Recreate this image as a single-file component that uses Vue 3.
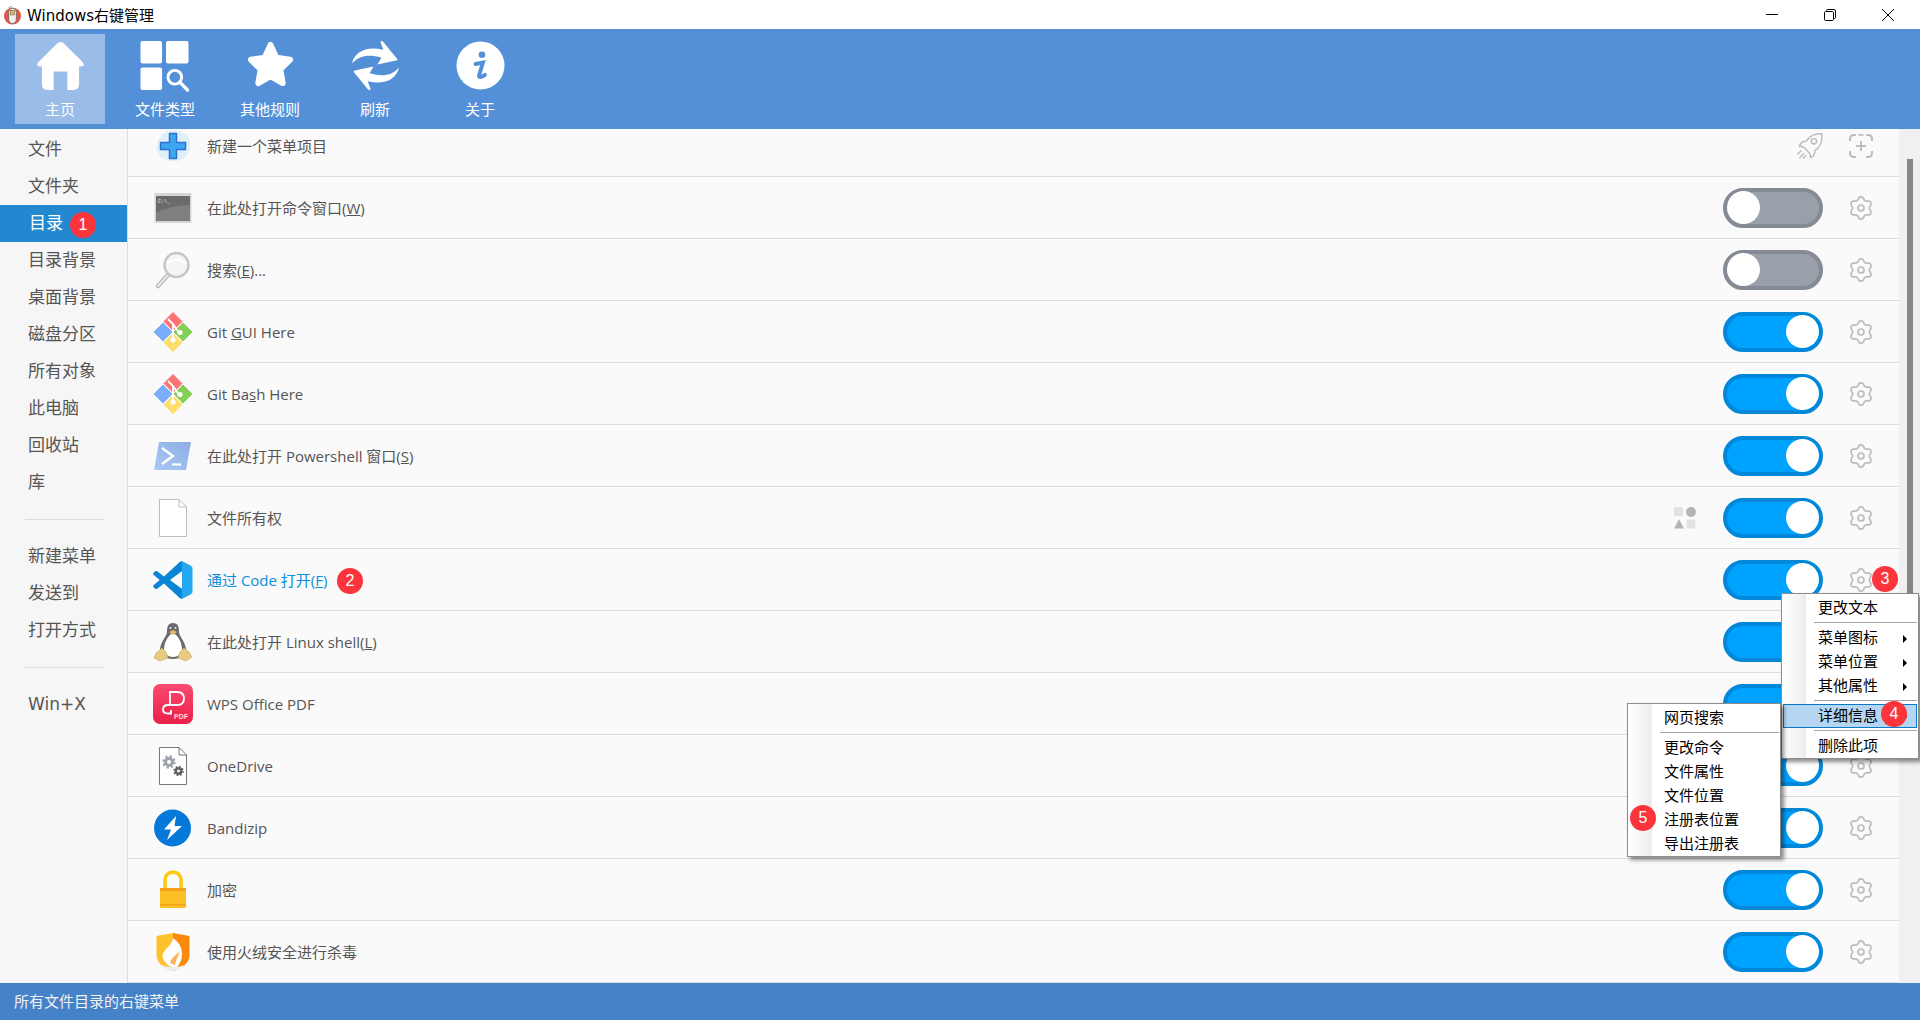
<script setup>
const tools = [
  { key: 'home', label: '主页', active: true },
  { key: 'types', label: '文件类型' },
  { key: 'rules', label: '其他规则' },
  { key: 'refresh', label: '刷新' },
  { key: 'about', label: '关于' }
]
const sideA = ['文件', '文件夹', '目录', '目录背景', '桌面背景', '磁盘分区', '所有对象', '此电脑', '回收站', '库']
const sideB = ['新建菜单', '发送到', '打开方式']
const rows = [
  { icon: 'plus', pre: '新建一个菜单项目', first: true },
  { icon: 'cmd', pre: '在此处打开命令窗口(', key: 'W', post: ')', off: true },
  { icon: 'search', pre: '搜索(', key: 'E', post: ')...', off: true },
  { icon: 'git', pre: 'Git ', key: 'G', post: 'UI Here' },
  { icon: 'git', pre: 'Git Ba', key: 's', post: 'h Here' },
  { icon: 'ps', pre: '在此处打开 Powershell 窗口(', key: 'S', post: ')' },
  { icon: 'doc', pre: '文件所有权', widget: true },
  { icon: 'code', pre: '通过 Code 打开(', key: 'F', post: ')', link: true },
  { icon: 'tux', pre: '在此处打开 Linux shell(', key: 'L', post: ')' },
  { icon: 'wps', pre: 'WPS Office PDF' },
  { icon: 'onedrive', pre: 'OneDrive' },
  { icon: 'bandizip', pre: 'Bandizip' },
  { icon: 'lock', pre: '加密' },
  { icon: 'shield', pre: '使用火绒安全进行杀毒' }
]
const menuOne = [
  { text: '更改文本' }, { sep: true },
  { text: '菜单图标', sub: true }, { text: '菜单位置', sub: true }, { text: '其他属性', sub: true }, { sep: true },
  { text: '详细信息', sub: true, hot: true }, { sep: true },
  { text: '删除此项' }
]
const menuTwo = [
  { text: '网页搜索' }, { sep: true },
  { text: '更改命令' }, { text: '文件属性' }, { text: '文件位置' }, { text: '注册表位置' }, { text: '导出注册表' }
]
const badges = [
  { n: 1, x: 83, y: 225 }, { n: 2, x: 350, y: 581 }, { n: 3, x: 1885, y: 579 },
  { n: 4, x: 1894, y: 714 }, { n: 5, x: 1643, y: 818 }
]
function lobed(cx, cy, base, amp) {
  const pts = []
  for (let i = 0; i < 96; i++) {
    const t = (i / 96) * Math.PI * 2
    const r = base + amp * Math.cos(6 * t)
    pts.push((cx + r * Math.sin(t)).toFixed(2) + ' ' + (cy - r * Math.cos(t)).toFixed(2))
  }
  return 'M' + pts.join('L') + 'Z'
}
const gearPath = lobed(12, 12, 9.8, 1.5)
</script>

<template>
  <div class="app">
    <header class="titlebar">
      <svg class="logo" viewBox="0 0 20 20">
        <circle cx="10" cy="11" r="9" fill="#e0584c" />
        <path d="M6 7a4 4 0 0 1 8 0v8a4 4 0 0 1-8 0z" fill="#f4f1ea" stroke="#555" stroke-width=".7" />
        <rect x="8" y="5" width="4" height="5" fill="#e8b64c" stroke="#555" stroke-width=".5" />
        <path d="M9 1l-3 1" stroke="#888" fill="none" />
      </svg>
      <span class="title">Windows右键管理</span>
      <div class="controls">
        <svg viewBox="0 0 12 12" class="ctl"><path d="M0 5.5H12" stroke="#000" /></svg>
        <svg viewBox="0 0 12 12" class="ctl"><path d="M2.5 2.5V1.5Q2.5.5 3.5.5H10Q11.5.5 11.5 2V8.5Q11.5 9.5 10.5 9.5H9.5" stroke="#000" fill="none" /><rect x=".5" y="2.5" width="9" height="9" rx="1.2" stroke="#000" fill="#fff" /></svg>
        <svg viewBox="0 0 12 12" class="ctl"><path d="M0 0L12 12M12 0L0 12" stroke="#000" /></svg>
      </div>
    </header>

    <nav class="toolbar">
      <div v-for="t in tools" :key="t.key" class="tool" :class="{ active: t.active }">
        <svg class="tool-icon" viewBox="0 0 50 50" fill="#fff">
          <template v-if="t.key === 'home'">
            <path d="M25 1Q27 1 29 3L47 21Q51 26 46 26H44V44Q44 50 38 50H32V31H18V50H12Q6 50 6 44V26H4Q-1 26 3 21L21 3Q23 1 25 1Z" />
          </template>
          <template v-else-if="t.key === 'types'">
            <g transform="translate(-1.5 0)">
              <rect x="1" width="22" height="23" rx="2" />
              <rect x="27" width="23" height="23" rx="2" />
              <rect x="1" y="27" width="22" height="23" rx="2" />
              <circle cx="36" cy="37" r="7" fill="none" stroke="#fff" stroke-width="3" />
              <path d="M41 42L49 50" stroke="#fff" stroke-width="3.4" stroke-linecap="round" />
            </g>
          </template>
          <template v-else-if="t.key === 'rules'">
            <path d="M25 4L31 17L45 19L35 29L37.500 43L25 36L12.500 43L15 29L5 19L19 17Z" stroke="#fff" stroke-width="6" stroke-linejoin="round" />
          </template>
          <template v-else-if="t.key === 'refresh'">
            <path d="M1 23C4 10 17 5 33 9L30 1Q31-1 33 1L47 18Q48 20 46 20L27 24L31 17C18 13 8 15 1 23Z" />
            <path transform="rotate(180 25 25)" d="M1 23C4 10 17 5 33 9L30 1Q31-1 33 1L47 18Q48 20 46 20L27 24L31 17C18 13 8 15 1 23Z" />
          </template>
          <template v-else>
            <circle cx="25" cy="25" r="24.500" />
            <circle cx="26.500" cy="14" r="3.400" fill="#5490d7" />
            <path d="M20 23.500L27.500 22L23.500 35Q23 39 29.500 34.500" fill="none" stroke="#5490d7" stroke-width="4" stroke-linecap="round" />
          </template>
        </svg>
        <span class="tool-label">{{ t.label }}</span>
      </div>
    </nav>

    <div class="main">
      <aside class="side">
        <div v-for="s in sideA" :key="s" class="side-item" :class="{ current: s === '目录' }">{{ s }}</div>
        <div class="side-sep"></div>
        <div v-for="s in sideB" :key="s" class="side-item">{{ s }}</div>
        <div class="side-sep"></div>
        <div class="side-item">Win+X</div>
      </aside>

      <section class="list-wrap">
        <div class="list">
          <div v-for="(r, i) in rows" :key="i" class="row">
            <svg class="row-icon" viewBox="0 0 40 40">
              <template v-if="r.icon === 'plus'">
                <path d="M8 10Q14 2 26 5Q38 8 37 20Q37 32 24 35Q10 37 5 27Q1 18 8 10Z" fill="#dff0fc" />
                <path d="M16.500 7.500H23.500V16.500H32.500V23.500H23.500V32.500H16.500V23.500H7.500V16.500H16.500Z" fill="#3ea6f2" stroke="#2a70cc" stroke-width="1.500" stroke-linejoin="round" />
              </template>
              <template v-else-if="r.icon === 'cmd'">
                <rect x="1.500" y="5" width="37" height="30" fill="#d6d6d6" />
                <rect x="3" y="8" width="34" height="25" fill="#7f7f7f" />
                <path d="M3 8H37V17Q18 17 3 25Z" fill="#6b6b6b" />
                <text x="5" y="14.500" class="cmd-text">C:\_</text>
              </template>
              <template v-else-if="r.icon === 'search'">
                <path d="M15 25L5 36" stroke="#bdbdbd" stroke-width="4.500" stroke-linecap="round" />
                <path d="M15 25L5 36" stroke="#f3f3f3" stroke-width="1.500" stroke-linecap="round" />
                <circle cx="23.500" cy="15" r="12" fill="#f5f5f5" stroke="#c6c6c6" stroke-width="2.500" />
                <path d="M14 13Q23 7 33 13" fill="none" stroke="#fff" stroke-width="2" />
              </template>
              <template v-else-if="r.icon === 'git'">
                <path d="M20 .5L29 9.500L20 18.500L11 9.500Z" fill="#fb7474" stroke="#fb7474" stroke-linejoin="round" />
                <path d="M10 11L19 20L10 29L1 20Z" fill="#7aaefc" stroke="#7aaefc" stroke-linejoin="round" />
                <path d="M30 11L39 20L30 29L21 20Z" fill="#83cf58" stroke="#83cf58" stroke-linejoin="round" />
                <path d="M20 21.500L29 30.500L20 39.500L11 30.500Z" fill="#fedd6a" stroke="#fedd6a" stroke-linejoin="round" />
                <path d="M15 7L20 12L25.500 20M20 12V28" stroke="#fff" stroke-width="1.800" fill="none" />
                <circle cx="27" cy="20.500" r="2.600" fill="#fff" />
                <circle cx="20" cy="28" r="2.600" fill="#fff" />
              </template>
              <template v-else-if="r.icon === 'ps'">
                <defs><linearGradient id="psg" x1="0" y1="1" x2="1" y2="0"><stop offset="0" stop-color="#a8c8f5" /><stop offset="1" stop-color="#8eaee2" /></linearGradient></defs>
                <path d="M6 6H38L33 34H1Z" fill="url(#psg)" />
                <path d="M9 12L20 20L9 28" fill="none" stroke="#fff" stroke-width="2.400" />
                <path d="M19 28.500H28" stroke="#fff" stroke-width="2.200" />
              </template>
              <template v-else-if="r.icon === 'doc'">
                <path d="M6.500 1.500H26L33.500 9V38.500H6.500Z" fill="#fff" stroke="#bdbdbd" />
                <path d="M26 1.500V9H33.500" fill="none" stroke="#bdbdbd" />
              </template>
              <template v-else-if="r.icon === 'code'">
                <path fill-rule="evenodd" d="M38 6L29.600 1.600C28.600 1.100 27.400 1.300 26.700 2.100L11 16.500L4.200 11.300C3.500 10.800 2.600 10.900 2 11.400L.8 12.500C0 13.200 0 14.400.8 15.100L6.700 20L.8 24.900C0 25.600 0 26.800.8 27.500L2 28.600C2.600 29.100 3.500 29.200 4.200 28.700L11 23.500L26.700 37.900C27.400 38.700 28.600 38.900 29.600 38.400L38 34ZM29 11L17 20L29 29Z" fill="#0a84d4" />
                <path d="M29 1.400L38 6C39 6.500 39.500 7.300 39.500 8.500V31.500C39.500 32.700 39 33.500 38 34L29 38.600Z" fill="#23a9f2" />
              </template>
              <template v-else-if="r.icon === 'tux'">
                <path d="M20 1C15 1 14 5 14 10C14 14 8 19 7 27C7 33 12 37 20 37C28 37 33 33 33 27C32 19 26 14 26 10C26 5 25 1 20 1Z" fill="#6a6a6a" />
                <path d="M20 11C15 13 11 21 11 27C11 32 15 35 20 35C25 35 29 32 29 27C29 21 25 13 20 11Z" fill="#fff" />
                <path d="M16 10L20 8L24 10L20 13Z" fill="#e3b766" />
                <circle cx="17.500" cy="6" r="1" fill="#eee" /><circle cx="22.500" cy="6" r="1" fill="#eee" />
                <path d="M9 26L13 30L15 36L7 39L1 36L3 31Z" fill="#e8cb82" stroke="#c9a95d" stroke-width=".6" />
                <path d="M31 26L27 30L25 36L33 39L39 35L36 30Z" fill="#e8cb82" stroke="#c9a95d" stroke-width=".6" />
              </template>
              <template v-else-if="r.icon === 'wps'">
                <defs><linearGradient id="wpsg" x1="0" y1="0" x2="0" y2="1"><stop offset="0" stop-color="#fb4a70" /><stop offset="1" stop-color="#e92049" /></linearGradient></defs>
                <rect width="40" height="40" rx="7" fill="url(#wpsg)" />
                <path d="M17 22V8H24Q31 8 31 14.500Q31 21 24 21H15Q10 21 10 25.500Q10 29.500 15 29.500H18V26" fill="none" stroke="#fff" stroke-width="1.800" />
                <text x="21" y="34.500" class="pdf-text">PDF</text>
              </template>
              <template v-else-if="r.icon === 'onedrive'">
                <path d="M6.500 1.500H26L33.500 9V38.500H6.500Z" fill="#fff" stroke="#777" />
                <path d="M26 1.500V9H33.500" fill="none" stroke="#777" />
                <circle cx="16" cy="16" r="3.500" fill="none" stroke="#9aa1a8" stroke-width="3" />
                <circle cx="16" cy="16" r="5.800" fill="none" stroke="#9aa1a8" stroke-width="1.800" stroke-dasharray="2.300 2.250" />
                <circle cx="25.500" cy="25" r="2.700" fill="none" stroke="#5c6166" stroke-width="2.400" />
                <circle cx="25.500" cy="25" r="4.500" fill="none" stroke="#5c6166" stroke-width="1.500" stroke-dasharray="1.800 1.730" />
              </template>
              <template v-else-if="r.icon === 'bandizip'">
                <circle cx="19.500" cy="20" r="18.500" fill="#0479d9" />
                <path d="M23 8L11 21.500H18L14 32L29 18H21.500Z" fill="#fff" />
              </template>
              <template v-else-if="r.icon === 'lock'">
                <path d="M12 19V10A8 8 0 0 1 28 10V19" fill="none" stroke="#ffc90e" stroke-width="3.600" />
                <rect x="7" y="18" width="26" height="20" rx="1.500" fill="#fdbf26" />
                <rect x="7" y="18" width="26" height="3" fill="#f59f1c" />
                <rect x="7" y="34" width="26" height="1.500" fill="#f59f1c" />
              </template>
              <template v-else>
                <path d="M20 1L3.500 4V24Q5 35 20 39Z" fill="#fdc12b" />
                <path d="M20 1L36.500 4V24Q35 35 20 39Z" fill="#fb8a0c" />
                <path d="M13 31Q6 24 13 17Q19 12 20 6Q29 12 29 22Q29 30 24 35Q16 36 13 31Z" fill="#fff" />
                <path d="M17 31Q19 24 27 20Q23 27 22 33Z" fill="#fdb35a" />
                <path d="M8 33Q13 38 20 39Q27 38 32 33Q26 35 20 35Q13 35 8 33Z" fill="#eee" />
              </template>
            </svg>
            <span class="row-text" :class="{ link: r.link }">{{ r.pre }}<u v-if="r.key">{{ r.key }}</u>{{ r.post }}</span>
            <svg v-if="r.widget" class="widget" viewBox="0 0 22 22">
              <rect width="9" height="9" rx="1.500" fill="#e3e3e3" />
              <circle cx="17" cy="5" r="5" fill="#b4b4b4" />
              <path d="M5 12L10 21.500H0Z" fill="#b4b4b4" />
              <rect x="12.500" y="12.500" width="9" height="9" rx="1.500" fill="#e3e3e3" />
            </svg>
            <div class="slot">
              <svg v-if="r.first" class="rocket" viewBox="1 1 24.500 25" fill="none" stroke="#bcbcbc" stroke-width="1.400" stroke-linejoin="round">
                <path d="M24.500 1.500C18 1.500 12.500 4.500 9.500 9C7 9 4 10.500 3 14C5 13.500 6.500 14 8 15.500L12 19.500C13.500 21 14 22.500 13.500 24.500C17 23.500 18 20.500 18 18C22.500 15 25.500 9 24.500 1.500Z" />
                <circle cx="17" cy="9" r="2.600" />
                <path d="M1 21.500L5 18M3 25L7.500 20.500M6.500 25.500L9.500 22.500" />
              </svg>
              <div v-else class="toggle" :class="{ off: r.off }"><span class="knob"></span></div>
            </div>
            <svg class="gear" viewBox="0 0 24 24" fill="none" stroke="#bcbcbc" stroke-width="1.700">
              <template v-if="r.first">
                <path d="M1 7V5Q1 1 5 1H7M17 1H19Q23 1 23 5V7M23 17V19Q23 23 19 23H17M7 23H5Q1 23 1 19V17M9.500.8H14.500" stroke-width="2" />
                <path d="M12 7V17M7 12H17" stroke-width="2" />
              </template>
              <template v-else>
                <path :d="gearPath" />
                <circle cx="12" cy="12" r="3" />
              </template>
            </svg>
          </div>
        </div>
        <div class="scroll"><div class="thumb"></div></div>
      </section>
    </div>

    <footer class="status">所有文件目录的右键菜单</footer>

    <div class="menu menu-one">
      <template v-for="(m, i) in menuOne" :key="i">
        <div v-if="m.sep" class="msep"></div>
        <div v-else class="mitem" :class="{ hot: m.hot }">{{ m.text }}<i v-if="m.sub" class="caret"></i></div>
      </template>
    </div>
    <div class="menu menu-two">
      <template v-for="(m, i) in menuTwo" :key="i">
        <div v-if="m.sep" class="msep"></div>
        <div v-else class="mitem">{{ m.text }}</div>
      </template>
    </div>

    <span v-for="b in badges" :key="b.n" class="badge" :style="{ left: b.x - 13 + 'px', top: b.y - 13 + 'px' }">{{ b.n }}</span>
  </div>
</template>

<style scoped>
.app {
  position: relative;
  width: 1920px;
  height: 1021px;
  display: flex;
  flex-direction: column;
  overflow: hidden;
  background: #fff;
  font-family: "Open Sans", "Noto Sans CJK SC", sans-serif;
  color: #555;
}
.titlebar {
  height: 29px;
  flex: none;
  display: flex;
  align-items: center;
  padding-left: 3px;
}
.logo { width: 19px; height: 20px; margin-right: 5px; }
.title { font: 15px "DejaVu Sans", "Noto Sans CJK SC", sans-serif; color: #000; }
.controls {
  margin-left: auto;
  display: flex;
  gap: 46px;
  padding-right: 26px;
}
.ctl { width: 12px; height: 12px; }
.toolbar {
  height: 100px;
  flex: none;
  background: #5490d7;
  display: flex;
  gap: 15px;
  padding: 5px 0 0 15px;
  box-sizing: border-box;
}
.tool {
  width: 90px;
  height: 90px;
  display: flex;
  flex-direction: column;
  align-items: center;
  padding-top: 7px;
  box-sizing: border-box;
}
.tool.active { background: #9abce8; }
.tool-icon { width: 49px; height: 49px; overflow: visible; }
.tool-label { font-size: 15px; line-height: 20px; margin-top: 9px; color: #fff; }
.main { flex: 1; display: flex; min-height: 0; }
.side {
  width: 127px;
  flex: none;
  background: #f6f6f6;
  border-right: 1px solid #dcdcdc;
  padding-top: 2px;
}
.side-item {
  height: 37px;
  line-height: 37px;
  padding-left: 28px;
  font: 17px/37px "DejaVu Sans", "Noto Sans CJK SC", sans-serif;
  color: #555;
}
.side-item.current { background: #2488d0; color: #fff; padding-left: 29px; }
.side-sep { height: 1px; background: #dcdcdc; margin: 18px 23px 18px 25px; }
.list-wrap { flex: 1; display: flex; min-width: 0; overflow: hidden; background: #fafafa; }
.list { flex: 1; margin-top: -14px; min-width: 0; }
.row {
  height: 62px;
  box-sizing: border-box;
  border-bottom: 1px solid #dcdcdc;
  display: flex;
  align-items: center;
  padding: 0 26px 0 25px;
}
.row-icon { width: 40px; height: 40px; flex: none; margin-right: 14px; }
.row-text { font-size: 15px; color: #555; }
.row-text.link { color: #0a8fdc; }
.cmd-text { font: 5px "Liberation Mono", monospace; fill: #eee; }
.pdf-text { font: bold 7px "Liberation Sans", sans-serif; fill: #ffd6de; }
.widget { width: 22px; height: 22px; margin-left: auto; margin-right: 27px; }
.row-text + .slot { margin-left: auto; }
.slot { width: 100px; display: flex; justify-content: flex-end; flex: none; }
.rocket { width: 26px; height: 26px; }
.toggle {
  width: 100px;
  height: 40px;
  box-sizing: border-box;
  border-radius: 20px;
  border: 4px solid #0288d9;
  background: #00a2ff;
  display: flex;
  justify-content: flex-end;
  align-items: center;
}
.toggle.off { border-color: #858b94; background: #9aa0aa; justify-content: flex-start; }
.knob { width: 33px; height: 33px; border-radius: 50%; background: #fff; flex: none; }
.gear { width: 24px; height: 24px; flex: none; margin-left: 26px; }
.scroll {
  width: 21px;
  flex: none;
  background: #f0f0f0;
  padding: 30px 7px 0 8px;
  box-sizing: border-box;
}
.thumb { height: 600px; background: #868686; }
.status {
  height: 37px;
  flex: none;
  margin-bottom: 1px;
  background: #4682c8;
  color: #f2f2f2;
  font-size: 15px;
  line-height: 36px;
  padding-left: 14px;
}
.menu {
  position: absolute;
  box-sizing: border-box;
  background: linear-gradient(90deg, #fff, #ececec) no-repeat 1px 0 / 23px 100%, #fff;
  border: 1px solid #8c8c8c;
  box-shadow: 3px 3px 4px rgba(0, 0, 0, .45);
  padding: 2px 1px 0;
  font-size: 15px;
  color: #000;
}
.menu-one { left: 1781px; top: 593px; width: 138px; height: 166px; }
.menu-two { left: 1627px; top: 703px; width: 154px; height: 154px; }
.mitem {
  position: relative;
  height: 24px;
  line-height: 22px;
  padding-left: 35px;
}
.mitem.hot {
  background: #b5d6f3;
  outline: 1px solid #0a78c8;
  outline-offset: -1px;
}
.msep { height: 6px; position: relative; }
.msep::before {
  content: "";
  position: absolute;
  left: 31px;
  right: 0;
  top: 2px;
  height: 1px;
  background: #a8a8a8;
}
.caret {
  position: absolute;
  right: 10px;
  top: 9px;
  width: 0;
  height: 0;
  border-left: 4px solid #000;
  border-top: 4px solid transparent;
  border-bottom: 4px solid transparent;
}
.badge {
  position: absolute;
  width: 26px;
  height: 26px;
  border-radius: 50%;
  background: #fb353b;
  color: #fff;
  font: 16px/26px "Liberation Sans", sans-serif;
  text-align: center;
}
</style>
